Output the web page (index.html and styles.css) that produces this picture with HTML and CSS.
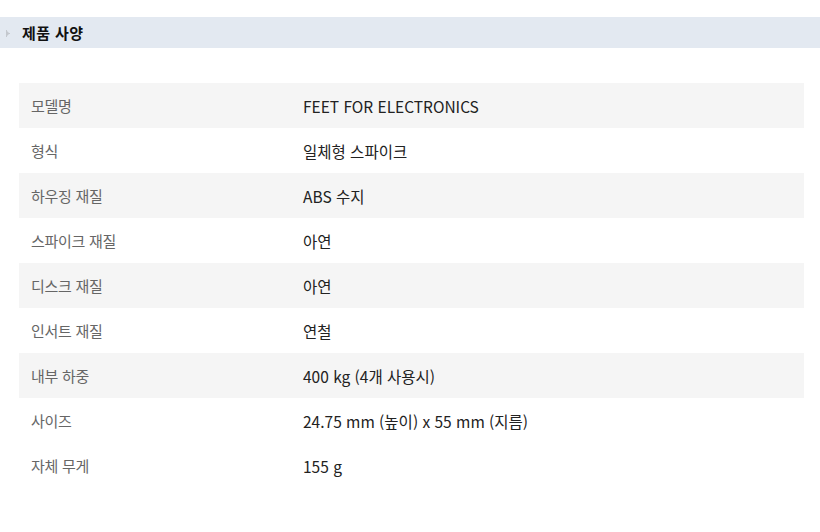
FILE: index.html
```html
<!DOCTYPE html>
<html lang="ko">
<head>
<meta charset="utf-8">
<link rel="stylesheet" href="styles.css">
</head>
<body>
<div class="page">
  <div class="section-head">
    <svg class="bullet" width="5" height="7" viewBox="0 0 5 7"><path d="M0.5 0 V7 M1.5 1.5 V5.5 M2.5 2.5 V4.5 M3.5 3 V4" fill="none" stroke="#c4c8ce" stroke-width="1"/></svg>
    <h2 class="title">제품 사양</h2>
  </div>
  <table class="spec">
    <tr class="shade"><th>모델명</th><td>FEET FOR ELECTRONICS</td></tr>
    <tr><th>형식</th><td>일체형 스파이크</td></tr>
    <tr class="shade"><th>하우징 재질</th><td>ABS 수지</td></tr>
    <tr><th>스파이크 재질</th><td>아연</td></tr>
    <tr class="shade"><th>디스크 재질</th><td>아연</td></tr>
    <tr><th>인서트 재질</th><td>연철</td></tr>
    <tr class="shade"><th>내부 하중</th><td>400 kg (4개 사용시)</td></tr>
    <tr><th>사이즈</th><td>24.75 mm (높이) x 55 mm (지름)</td></tr>
    <tr><th>자체 무게</th><td>155 g</td></tr>
  </table>
</div>
</body>
</html>
```
FILE: styles.css
```css
html, body { margin: 0; padding: 0; background: #fff; }
body { font-family: "Noto Sans CJK KR", "Noto Sans", sans-serif; }
.page { padding-top: 17px; }
.section-head {
  height: 31px;
  background: #e3e9f1;
  display: flex;
  align-items: center;
  padding-left: 6px;
}
.bullet { margin-right: 11px; margin-top: 1px; }
.title { margin: 0; font-size: 15px; font-weight: 700; color: #111; letter-spacing: 0.4px; }
.spec {
  margin: 35px 0 0 19px;
  width: 785px;
  border-collapse: collapse;
  font-size: 15px;
}
.spec tr { height: 45px; }
.spec tr.shade { background: #f5f5f5; }
.spec th {
  width: 272px;
  padding: 0 0 0 12px;
  text-align: left;
  font-weight: 400;
  color: #666;
  letter-spacing: -0.3px;
}
.spec td {
  padding: 0;
  color: #222;
  font-size: 15.5px;
  letter-spacing: 0;
}
```
